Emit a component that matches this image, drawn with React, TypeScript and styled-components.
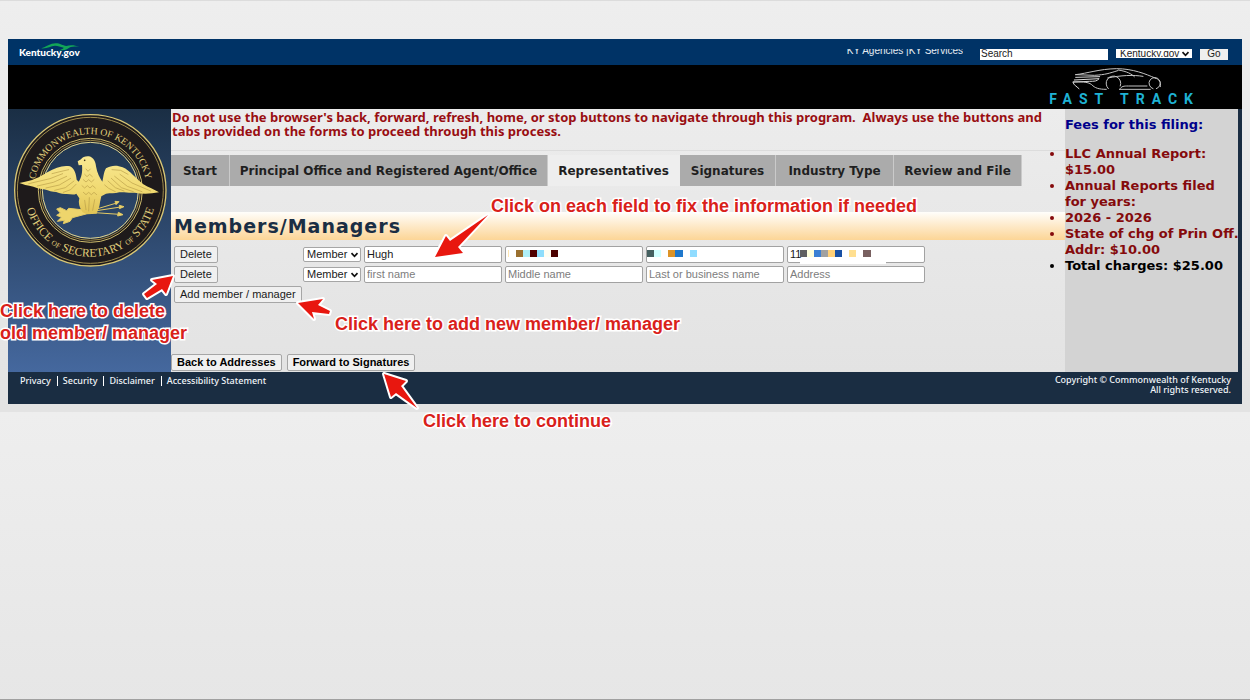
import React from "react";
import styled, { createGlobalStyle } from "styled-components";

const verdana = `"DejaVu Sans", Verdana, sans-serif`;
const arial = `"Liberation Sans", Arial, sans-serif`;

const GlobalStyle = createGlobalStyle`
  *, *::before, *::after { box-sizing: border-box; }
  body { margin: 0; }
`;

const Page = styled.div`
  position: relative;
  min-height: 100vh;
  padding: 38px 8px 8px;
  overflow-x: hidden;
  border-top: 1px solid #dcdcdc;
  border-bottom: 1px solid #a0a0a0;
  background: linear-gradient(#eeeeee, #e3e3e3) 0 0 / 100% 411px repeat-y;
  font-family: ${verdana};
`;

const Shell = styled.div`
  background: #1a2d42;
`;

/* Top bar */
const TopBar = styled.header`
  display: flex;
  justify-content: space-between;
  align-items: flex-start;
  height: 26px;
  padding: 0 14px 0 11px;
  background: #003366;
`;

const StateLogo = styled.a`
  position: relative;
  display: block;
  padding-top: 6px;
  color: #fff;
  font: 900 10px/14px Lato, "Noto Sans", sans-serif;
  text-decoration: none;
  svg {
    position: absolute;
    left: 22px;
    top: 4px;
  }
`;

const TopTools = styled.form`
  display: flex;
  align-items: flex-start;
  gap: 8px;
  margin: 0;
  padding-top: 10px;
`;

const AgencyLinks = styled.nav`
  height: 9px;
  margin-right: 9px;
  overflow: hidden;
  color: #e6ecf2;
  font: 10px/4px ${arial};
  white-space: nowrap;
  a {
    color: inherit;
    text-decoration: none;
  }
`;

const SearchBox = styled.input`
  width: 128px;
  height: 11px;
  padding: 0 1px 2px;
  border: 0;
  background: #fff;
  color: #222;
  font: 10px/9px ${arial};
`;

const SelectWrap = styled.span`
  position: relative;
  display: flex;
  svg {
    position: absolute;
    right: 2px;
    top: 50%;
    margin-top: -3px;
    pointer-events: none;
  }
`;

const SiteSelect = styled.select`
  appearance: none;
  width: 76px;
  height: 9px;
  padding: 0 4px;
  border: 0;
  border-radius: 0;
  background: #fff;
  color: #222;
  font: 10px/7px ${arial};
`;

const GoButton = styled.button`
  width: 28px;
  height: 11px;
  padding: 0 0 2px;
  border: 0;
  background: #efefef;
  color: #222;
  font: 10px/9px ${arial};
`;

const Banner = styled.div`
  display: flex;
  justify-content: flex-end;
  height: 44px;
  padding: 3px 42px 0 0;
  background: #000;
`;

const FastTrack = styled.div`
  display: flex;
  flex-direction: column;
  align-items: center;
  color: #1fb2d4;
  font: 700 14px/14px Roboto, ${arial};
  letter-spacing: 7px;
  white-space: nowrap;
  svg {
    margin-right: 16px;
  }
`;

/* Three-column body */
const Body = styled.div`
  display: grid;
  grid-template-columns: 163px minmax(0, 1fr) 173px;
  padding-right: 4px;
`;

const SealColumn = styled.div`
  padding: 4px 0 0 5px;
  background: linear-gradient(#1a2e44, #45689e);
`;

const Content = styled.main`
  display: flex;
  flex-direction: column;
  background: linear-gradient(#ececec, #e3e3e3);
`;

const Notice = styled.p`
  margin: 0;
  padding: 1px 0 12px 1px;
  border-bottom: 1px solid #dcdcdc;
  color: #990e12;
  font: 700 13px/14px "Noto Sans", ${verdana};
  white-space: nowrap;
`;

const Tabs = styled.nav`
  display: flex;
  margin-top: 4px;
`;

const Tab = styled.a<{ $width: number; $active?: boolean }>`
  width: ${(p) => p.$width}px;
  padding-top: 1px;
  border-right: 1px solid ${(p) => (p.$active ? "#eeeeee" : "#cacaca")};
  background: ${(p) => (p.$active ? "#eeeeee" : "#ababab")};
  color: #1f1f1f;
  font-weight: 700;
  font-size: 12px;
  line-height: 30px;
  text-align: center;
  text-decoration: none;
  white-space: nowrap;
`;

const Title = styled.h1`
  margin: 26px 0 0;
  padding: 1px 0 0 3px;
  background: linear-gradient(#fffefb, #fcd596);
  color: #1a2e44;
  font-size: 19px;
  line-height: 27px;
  letter-spacing: 1px;
`;

const Members = styled.div`
  display: flex;
  flex-direction: column;
  align-items: flex-start;
  gap: 3px;
  padding: 6px 0 0 3px;
`;

const MemberRow = styled.div`
  display: grid;
  grid-template-columns: 126px 58px repeat(4, 138px);
  column-gap: 3px;
  align-items: center;
  justify-items: start;
`;

const Button = styled.button`
  height: 17px;
  padding: 0 5px;
  border: 1px solid #a6a6a6;
  border-radius: 2px;
  background: #f0f0f0;
  color: #1a1a1a;
  font: 11px/13px ${arial};
  white-space: nowrap;
`;

const NavButton = styled(Button)`
  color: #000;
  font-weight: 700;
`;

const RoleSelect = styled.select`
  appearance: none;
  width: 58px;
  height: 15px;
  padding: 0 3px;
  border: 1px solid #a6a6a6;
  border-radius: 2px;
  background: #fff;
  color: #1a1a1a;
  font: 11px/13px ${arial};
`;

const Field = styled.span`
  position: relative;
  display: flex;
  width: 100%;
  svg {
    position: absolute;
    left: 0;
    top: 0;
    pointer-events: none;
  }
`;

const TextInput = styled.input`
  width: 100%;
  height: 17px;
  padding: 0 2px 2px;
  border: 1px solid #a2a2a2;
  border-radius: 2px;
  background: #fff;
  color: #1a1a1a;
  font: 11px/13px ${arial};
  &::placeholder {
    color: #7d7d7d;
    opacity: 1;
  }
`;

const FormNav = styled.div`
  display: flex;
  gap: 5px;
  padding: 51px 0 1px;
`;

const Fees = styled.aside`
  padding-top: 8px;
  background: #d3d3d3;
  font-weight: 700;
  font-size: 13px;
  line-height: 16px;
  white-space: nowrap;
  h2 {
    margin: 0 0 13px;
    color: #00008b;
    font-size: 13px;
    line-height: 16px;
  }
  ul {
    margin: 0;
    padding: 0;
  }
`;

const FeeItem = styled.li<{ $total?: boolean }>`
  color: ${(p) => (p.$total ? "#000" : "#850a0c")};
`;

const Footer = styled.footer`
  display: flex;
  justify-content: space-between;
  align-items: flex-start;
  height: 32px;
  padding: 3px 11px 0 12px;
  background: #1a2d42;
  color: #f0f4f8;
  font: 500 9px/10px "Noto Sans", ${verdana};
`;

const FooterLinks = styled.nav`
  display: flex;
  padding-top: 1px;
  a {
    color: inherit;
    text-decoration: none;
  }
  a + a {
    margin-left: 6px;
    padding-left: 5px;
    border-left: 1px solid #fff;
  }
`;

const Copyright = styled.div`
  text-align: right;
`;

/* Tutorial notes drawn over the page */
const Note = styled.div<{ $left: number; $top: number }>`
  position: absolute;
  left: ${(p) => p.$left}px;
  top: ${(p) => p.$top}px;
  color: #d9211a;
  font: 700 18px/22px ${arial};
  white-space: nowrap;
  pointer-events: none;
  -webkit-text-stroke: 3px #fff;
  paint-order: stroke fill;
`;

const ArrowSvg = styled.svg<{ $left: number; $top: number }>`
  position: absolute;
  left: ${(p) => p.$left}px;
  top: ${(p) => p.$top}px;
  overflow: visible;
  pointer-events: none;
`;

function Arrow({ left, top, points }: { left: number; top: number; points: string }) {
  return (
    <ArrowSvg $left={left} $top={top} width="60" height="45" aria-hidden="true">
      <polygon points={points} fill="#e8170f" stroke="#fff" strokeWidth="4" strokeLinejoin="round" paintOrder="stroke" />
    </ArrowSvg>
  );
}

function Chevron() {
  return (
    <svg width="9" height="6" viewBox="0 0 9 6" aria-hidden="true">
      <path d="M1.5 1.2 4.5 4.3 7.5 1.2" fill="none" stroke="#111" strokeWidth="1.7" />
    </svg>
  );
}

function Seal() {
  return (
    <svg width="155" height="155" viewBox="39 24 465 465" role="img" aria-label="Seal of the Secretary of State">
      <defs>
        <linearGradient id="gold" x1="0" y1="0" x2="0" y2="1">
          <stop offset="0" stopColor="#f9e992" />
          <stop offset="0.6" stopColor="#f0d970" />
          <stop offset="1" stopColor="#e0c355" />
        </linearGradient>
        <path id="arcTop" d="M102 256 A169 169 0 0 1 440 256" />
        <path id="arcBottom" d="M72 256 A199 199 0 0 0 470 256" />
      </defs>
      <circle cx="271" cy="256" r="187" fill="none" stroke="#1e1a1b" strokeWidth="82" />
      <circle cx="271" cy="256" r="227" fill="none" stroke="#d8c878" strokeWidth="4" />
      <circle cx="271" cy="256" r="219" fill="none" stroke="#a08c4c" strokeWidth="3" />
      <circle cx="271" cy="256" r="156" fill="none" stroke="#cdbb6c" strokeWidth="3" />
      <circle cx="271" cy="256" r="150" fill="none" stroke="#9c894a" strokeWidth="3" />
      <circle cx="271" cy="256" r="144" fill="none" stroke="#e2d58e" strokeWidth="3" />
      <g fill="#e0cf7c" fontFamily="Liberation Serif, Times New Roman, serif" textAnchor="middle">
        <text fontSize="29">
          <textPath href="#arcTop" startOffset="50%">COMMONWEALTH OF KENTUCKY</textPath>
        </text>
        <text fontSize="35">
          <textPath href="#arcBottom" startOffset="50%">
            OFFICE <tspan fontSize="22">OF</tspan> SECRETARY <tspan fontSize="22">OF</tspan> STATE
          </textPath>
        </text>
      </g>
      <g stroke="#e3ca64" strokeWidth="3" fill="#eed56c">
        <path d="M270 318 350 294M270 320 362 306M270 322 358 328M345 289l12 1-9 9zM358 301l14 4-14 6zM355 322l14 7-16 4z" />
        <path d="M262 316 206 310 200 317 181 308 170 312 181 324 170 331 184 337 172 349 193 346 190 356 210 349 217 338 262 326z" />
      </g>
      <path
        d="M58 234C98 228 120 216 142 202 166 187 190 180 210 184 224 190 228 208 230 224L236 230C244 218 248 204 246 180L236 181 233 169 243 163C247 155 258 153 267 154 281 158 287 170 288 184 291 204 300 220 307 230 310 220 310 204 318 190 334 180 352 180 368 187 390 196 408 222 430 238 446 248 462 253 477 262 450 267 426 267 404 263 386 265 372 260 358 262 344 266 332 264 318 266L304 274 300 292C299 306 294 314 290 326L262 328 248 322C238 308 234 294 238 280L229 266C220 272 208 266 198 267 184 268 172 260 160 260 148 260 138 252 126 252 108 250 92 241 76 240z"
        fill="url(#gold)"
      />
      <g fill="none" stroke="#b99f48" strokeWidth="2" strokeLinecap="round">
        <path d="M86 236 150 221 188 206M112 243 160 232 200 214M138 249 178 240 212 220M164 256 196 248 222 228M190 262 212 254 228 238M156 206 180 200 206 194" />
        <path d="M452 258 396 234 360 208M426 260 382 244 344 214M400 260 364 248 334 220M372 258 346 248 324 228M346 260 326 250 314 240M336 194 362 196 384 208" />
        <path d="M258 192l6 7 7-7M254 208l7 7 8-7 8 7M250 224l8 7 8-7 8 7 8-7M246 242l8 7 8-7 8 7 8-7 8 7M250 262l8 7 8-7 8 7 8-7 8 7M268 278 266 318M254 286 258 314M284 284 278 316" />
      </g>
      <circle cx="254" cy="166" r="2.5" fill="#3a2f12" />
    </svg>
  );
}

/* Side view of a sports car in thin lines */
function Car() {
  return (
    <svg width="92" height="24" viewBox="0 0 276 72" fill="none" stroke="#c4c4c4" strokeWidth="3" strokeLinecap="round" aria-hidden="true">
      <path d="M14 20C50 16 84 3 136 2c50 0 88 16 116 28" />
      <path d="M14 20 70 22c34-2 44-6 70-14M142 6c26 4 40 12 48 20M110 30c40-8 76-10 106-5" />
      <path d="M14 28 86 26M10 36 84 32c-4 8-16 8-28 8L6 42c2 10 10 12 18 20" stroke="#dcdcdc" />
      <path d="M6 42c22 0 44-2 56 8 10 10 20 14 44 14" />
      <path d="M112 62A22 22 0 1 1 148 54M146 64c6-10 12-10 26-10h56M146 64h92" />
      <path d="M246 62A17 17 0 1 1 256 62M252 30c14 4 18 12 16 26" />
    </svg>
  );
}

/* Pixelated personal data: [x, width, colour] */
type Block = [number, number, string];

function Mosaic({ blocks, patch }: { blocks: Block[]; patch?: boolean }) {
  return (
    <svg width="138" height="19" aria-hidden="true">
      {patch && <rect x="13" y="14" width="86" height="4" fill="#fff" />}
      {blocks.map(([x, w, fill]) => (
        <rect key={x} x={x} y="4" width={w} height="7" fill={fill} />
      ))}
    </svg>
  );
}

const middleBlocks: Block[] = [
  [3, 1, "#fde6b4"],
  [11, 7, "#9a7030"],
  [18, 7, "#b0f0f8"],
  [25, 7, "#500000"],
  [32, 7, "#90defc"],
  [39, 7, "#fffef2"],
  [46, 7, "#4c0000"],
];
const lastBlocks: Block[] = [
  [1, 7, "#446060"],
  [8, 7, "#d0ffff"],
  [22, 7, "#dd9428"],
  [29, 8, "#1f78cc"],
  [44, 7, "#90dcff"],
];
const addressBlocks: Block[] = [
  [13, 7, "#606060"],
  [20, 7, "#ffffdc"],
  [27, 7, "#3b80d4"],
  [34, 7, "#a0a0a0"],
  [41, 7, "#ffd078"],
  [48, 7, "#1850a4"],
  [62, 7, "#ffdf90"],
  [76, 8, "#786060"],
];

const tabs = [
  { label: "Start", width: 59 },
  { label: "Principal Office and Registered Agent/Office", width: 318 },
  { label: "Representatives", width: 132, active: true },
  { label: "Signatures", width: 96 },
  { label: "Industry Type", width: 118 },
  { label: "Review and File", width: 128 },
];

function Member({ first, redacted }: { first?: string; redacted?: boolean }) {
  return (
    <MemberRow>
      <Button type="button">Delete</Button>
      <SelectWrap>
        <RoleSelect aria-label="Role" defaultValue="Member">
          <option>Member</option>
          <option>Manager</option>
        </RoleSelect>
        <Chevron />
      </SelectWrap>
      <Field>
        <TextInput aria-label="First name" placeholder="first name" defaultValue={first} />
      </Field>
      <Field>
        <TextInput aria-label="Middle name" placeholder={redacted ? "" : "Middle name"} />
        {redacted && <Mosaic blocks={middleBlocks} />}
      </Field>
      <Field>
        <TextInput aria-label="Last or business name" placeholder={redacted ? "" : "Last or business name"} />
        {redacted && <Mosaic blocks={lastBlocks} />}
      </Field>
      <Field>
        <TextInput aria-label="Address" placeholder="Address" defaultValue={redacted ? "11" : ""} />
        {redacted && <Mosaic blocks={addressBlocks} patch />}
      </Field>
    </MemberRow>
  );
}

export default function App() {
  return (
    <Page>
      <GlobalStyle />
      <Shell>
        <TopBar>
          <StateLogo href="#">
            Kentucky.gov
            <svg width="38" height="8" viewBox="0 0 114 24" fill="#12a558" aria-hidden="true">
              <path d="M0 16C16 12 28 1 44 1c14 0 20 7 32 8 12-4 26-3 38 3-18-3-26 0-34 5-6 3-14 6-28 5 8-2 14-4 16-8C56 11 52 8 42 8 28 9 18 18 0 16z" />
            </svg>
          </StateLogo>
          <TopTools>
            <AgencyLinks>
              <a href="#">KY Agencies</a> |<a href="#">KY Services</a>
            </AgencyLinks>
            <SearchBox aria-label="Search" defaultValue="Search" />
            <SelectWrap>
              <SiteSelect aria-label="Search scope" defaultValue="Kentucky.gov">
                <option>Kentucky.gov</option>
              </SiteSelect>
              <Chevron />
            </SelectWrap>
            <GoButton type="button">Go</GoButton>
          </TopTools>
        </TopBar>
        <Banner>
          <FastTrack>
            <Car />
            <span>FAST TRACK</span>
          </FastTrack>
        </Banner>
        <Body>
          <SealColumn>
            <Seal />
          </SealColumn>
          <Content>
            <Notice>
              Do not use the browser's back, forward, refresh, home, or stop buttons to navigate through this program.&nbsp;
              Always use the buttons and
              <br />
              tabs provided on the forms to proceed through this process.
            </Notice>
            <Tabs>
              {tabs.map((t) => (
                <Tab key={t.label} href="#" $width={t.width} $active={t.active}>
                  {t.label}
                </Tab>
              ))}
            </Tabs>
            <Title>Members/Managers</Title>
            <Members>
              <Member first="Hugh" redacted />
              <Member />
              <Button type="button">Add member / manager</Button>
            </Members>
            <FormNav>
              <NavButton type="button">Back to Addresses</NavButton>
              <NavButton type="button">Forward to Signatures</NavButton>
            </FormNav>
          </Content>
          <Fees>
            <h2>Fees for this filing:</h2>
            <ul>
              <FeeItem>
                LLC Annual Report:
                <br />
                $15.00
              </FeeItem>
              <FeeItem>
                Annual Reports filed
                <br />
                for years:
              </FeeItem>
              <FeeItem>2026 - 2026</FeeItem>
              <FeeItem>
                State of chg of Prin Off.
                <br />
                Addr: $10.00
              </FeeItem>
              <FeeItem $total>Total charges: $25.00</FeeItem>
            </ul>
          </Fees>
        </Body>
        <Footer>
          <FooterLinks>
            <a href="#">Privacy</a>
            <a href="#">Security</a>
            <a href="#">Disclaimer</a>
            <a href="#">Accessibility Statement</a>
          </FooterLinks>
          <Copyright>
            Copyright © Commonwealth of Kentucky
            <br />
            All rights reserved.
          </Copyright>
        </Footer>
      </Shell>

      <Note $left={491} $top={194}>Click on each field to fix the information if needed</Note>
      <Note $left={0} $top={299}>
        Click here to delete
        <br />
        old member/ manager
      </Note>
      <Note $left={335} $top={312}>Click here to add new member/ manager</Note>
      <Note $left={423} $top={409}>Click here to continue</Note>
      <Arrow left={434} top={213} points="1,43 12,22 16,27 54,1 24,33 29,39" />
      <Arrow left={143} top={274} points="30,1 9,5 14,9 1,19 4,23 19,14 23,19" />
      <Arrow left={297} top={298} points="1,4 26,0 21,6 33,12 32,15 15,13 17,20" />
      <Arrow left={383} top={372} points="1,1 23,8 18,13 34,35 13,20 8,24" />
    </Page>
  );
}
